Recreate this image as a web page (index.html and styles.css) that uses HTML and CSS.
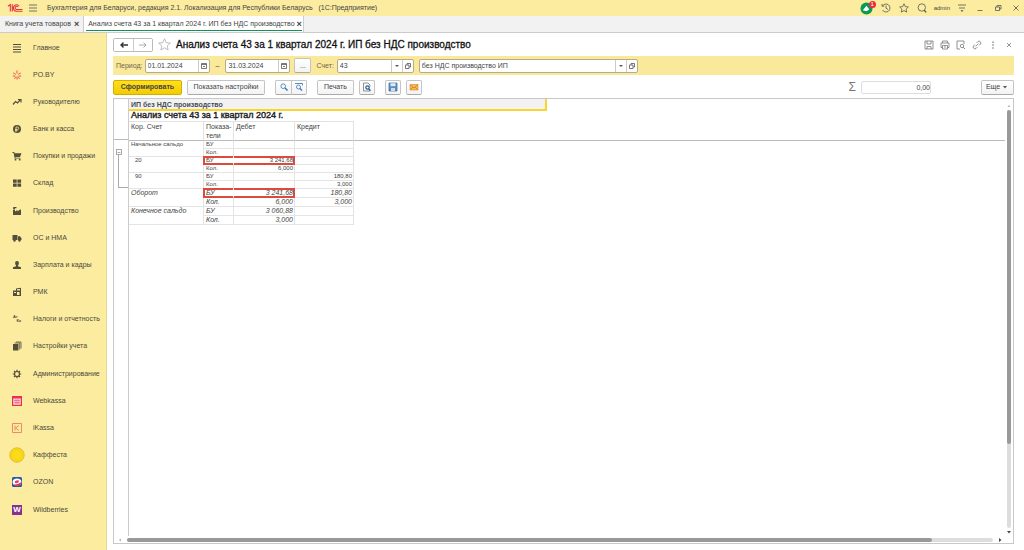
FILE: index.html
```html
<!DOCTYPE html>
<html lang="ru">
<head>
<meta charset="utf-8">
<title>Бухгалтерия для Беларуси</title>
<link rel="stylesheet" href="styles.css">
</head>
<body>
<header class="topbar">
  <svg class="logo" viewBox="0 0 16 10"><path d="M1 3.200l2.300-1.700V8.500M5.300 1.300V8.500M12.300 3A3.300 3.300 0 1 0 9.500 8.300H15.500M11 4A1.600 1.600 0 1 0 9.500 6.500H15.500" fill="none" stroke="#e5353c" stroke-width="1.100"/></svg>
  <button class="plain menu" aria-label="Меню"><svg viewBox="0 0 10 10"><path d="M1 2h8M1 5h8M1 8h8"/></svg></button>
  <span class="app-title">Бухгалтерия для Беларуси, редакция 2.1. Локализация для Республики Беларусь &nbsp; (1С:Предприятие)</span>
  <div class="top-tools">
    <button class="plain bell" aria-label="Уведомления"><svg viewBox="0 0 14 14"><circle cx="7" cy="7" r="6.500" fill="#0a9a55" stroke="none"/><path d="M3 9l4-5 3 4-3 2z" fill="#fff" stroke="none"/></svg><span class="badge">1</span></button>
    <button class="plain" aria-label="История"><svg viewBox="0 0 10 10"><path d="M1.500 3A4 4 0 1 1 1.500 7M1 1v2.200h2.200M5 2.500V5.200L7 6.500"/></svg></button>
    <button class="plain" aria-label="Избранное"><svg viewBox="0 0 10 10"><path d="M5 .8l1.300 2.800 3 .4-2.200 2.100.6 3L5 7.600 2.300 9.100l.6-3L.7 4l3-.4z"/></svg></button>
    <button class="plain" aria-label="Поиск"><svg viewBox="0 0 10 10"><circle cx="4.800" cy="4.500" r="3.700"/><path d="M7.200 7.200l2 2.200" stroke-width="1.300"/></svg></button>
    <span class="user">admin</span>
    <button class="plain" aria-label="Настройки"><svg viewBox="0 0 10 10"><path d="M1 2h8M2 5h6"/><path d="M3.500 7.200h3L5 9z" class="solid"/></svg></button>
    <button class="plain win" aria-label="Свернуть"><svg viewBox="0 0 10 10"><path d="M2.500 7.500h5"/></svg></button>
    <button class="plain win" aria-label="Развернуть"><svg viewBox="0 0 10 10"><path d="M2.500 4h4v3.500h-4zM4 4V2.500h4V6H6.500"/></svg></button>
    <button class="plain win" aria-label="Закрыть"><svg viewBox="0 0 10 10"><path d="M2.500 2.500l5 5M7.500 2.500l-5 5"/></svg></button>
  </div>
</header>
<nav class="tabs">
  <button class="tab"><span>Книга учета товаров</span><b>×</b></button>
  <button class="tab active"><span>Анализ счета 43 за 1 квартал 2024 г. ИП без НДС производство</span><b>×</b></button>
</nav>
<div class="layout">
<nav class="sidebar">
  <a href="#"><svg viewBox="0 0 10 10"><path d="M1 1.500h8M1 4h8M1 6.500h8M1 9h8" class="ln"/></svg>Главное</a>
  <a href="#"><svg viewBox="0 0 10 10"><path d="M5 .5v3M5 6.500v3M1.200 3l2.600 1.300M8.800 3L6.200 4.300M.8 6h2.600M9.200 6H6.600M2.500 8.800l1.300-2M7.500 8.800l-1.300-2" stroke="#ee3c43" fill="none" stroke-width=".9"/></svg>PO.BY</a>
  <a href="#"><svg viewBox="0 0 10 10"><path d="M1 7.500l2.500-3 2 1.500L8 3M6 2.500h3v3" class="ln"/></svg>Руководителю</a>
  <a href="#"><svg viewBox="0 0 10 10"><circle cx="5" cy="5" r="4"/><path d="M4 8V3h1.500a1.200 1.200 0 0 1 0 2.500H3M3 6.700h2.500" fill="none" stroke="#fbec9f" stroke-width=".8"/></svg>Банк и касса</a>
  <a href="#"><svg viewBox="0 0 10 10"><path d="M.5 1h1.700l.5 1.200H9.500L8 6H3.500v.7H8.500v.8H2.700L1.600 2H.5z"/><circle cx="3.500" cy="8.700" r=".9"/><circle cx="7.700" cy="8.700" r=".9"/></svg>Покупки и продажи</a>
  <a href="#"><svg viewBox="0 0 10 10"><path d="M1 1.500h3.700v3.300H1zM5.400 1.500h3.700v3.300H5.400zM1 5.500h3.700v3.300H1zM5.400 5.500h3.700v3.300H5.400z"/></svg>Склад</a>
  <a href="#"><svg viewBox="0 0 10 10"><path d="M1 9V4h2v1.500L5.500 4v1.500L8 3.500h1V9zM1.200 1h3.300v1.200H3V3.500H1.200z"/></svg>Производство</a>
  <a href="#"><svg viewBox="0 0 10 10"><path d="M.5 2h5v5h-5zM6 3.200h2l1.500 2V7H6z"/><circle cx="2.500" cy="7.500" r="1.200"/><circle cx="7.500" cy="7.500" r="1.200"/></svg>ОС и НМА</a>
  <a href="#"><svg viewBox="0 0 10 10"><path d="M5 1a1.900 1.900 0 0 1 1.900 2C6.900 4.500 6 5.500 6 5.500v.8l3 1V9H1V7.300l3-1v-.8S3.100 4.500 3.100 3A1.900 1.900 0 0 1 5 1z"/></svg>Зарплата и кадры</a>
  <a href="#"><svg viewBox="0 0 10 10"><path d="M1 3.500h3V1.500l5-.7V9H1zm4-1.200v1.200h3V2zM2 5v1h2V5zm3 0v3h2.500V5z" fill-rule="evenodd"/></svg>РМК</a>
  <a href="#"><span class="dtkt"><i>Ат</i><i>Кк</i></span>Налоги и отчетность</a>
  <a href="#"><svg viewBox="0 0 10 10"><path d="M1 3h5.500v6.500H1z"/><path d="M2.500 2h5.200v6.500M4 1h5v6.500" fill="none" stroke="#544f3d" stroke-width=".8"/></svg>Настройки учета</a>
  <a href="#"><svg viewBox="0 0 10 10"><circle cx="5" cy="5" r="2.500" class="ln"/><path d="M5 .8v1.700M5 7.500v1.700M.8 5h1.700M7.500 5h1.700M2 2l1.200 1.200M8 2L6.800 3.200M2 8l1.200-1.200M8 8L6.800 6.800" class="ln"/></svg>Администрирование</a>
  <a href="#"><svg viewBox="0 0 10 10"><path d="M0 0h10v10H0z" fill="#ec3150"/><path d="M1.200 2.500h7.600v6.300H1.200z" fill="#fbd3d8"/><path d="M2 4.500h6M2 6.500h6M4 3.200v5M6 3.200v5" stroke="#ec5068" stroke-width=".6"/></svg>Webkassa</a>
  <a href="#"><svg viewBox="0 0 10 10"><path d="M.5.5h9v9h-9zM3 2.500v5M6.800 2.500L3.500 5 7 7.500" fill="none" stroke="#ee7f5c" stroke-width=".9"/></svg>iKassa</a>
  <a href="#"><svg class="big" viewBox="0 0 16 16"><circle cx="8" cy="8" r="7.200" fill="#fbdc16" stroke="#dcae22"/><circle cx="8" cy="8" r="5.200" fill="none" stroke="#f0c618" stroke-width=".6"/></svg>Каффеста</a>
  <a href="#"><svg viewBox="0 0 10 10"><rect width="10" height="10" rx="1.500" fill="#2657a7"/><ellipse cx="5" cy="5" rx="4.400" ry="3.600" fill="#fff"/><path d="M9.400 5C9.400 9 4 10 1.500 7.500 5 7.800 7 6.500 9.400 5z" fill="#f02c50"/><ellipse cx="5" cy="4.700" rx="2.200" ry="1.300" fill="#ee3a5a" transform="rotate(-20 5 5)"/></svg>OZON</a>
  <a href="#"><span class="wb">W</span>Wildberries</a>
</nav>
<main class="main">
  <div class="heading">
    <div class="nav-buttons"><button aria-label="Назад"><svg viewBox="0 0 10 10"><path d="M9 5H2M4.500 2.500L2 5l2.500 2.500" stroke="#333" stroke-width="1.400"/></svg></button><button aria-label="Вперед"><svg viewBox="0 0 10 10"><path d="M1 5h7M5.500 2.500L8 5 5.500 7.500" stroke="#999"/></svg></button></div>
    <button class="plain star" aria-label="В избранное"><svg viewBox="0 0 10 10"><path d="M5 .6l1.300 3 3.200.3L7.100 6l.7 3.200L5 7.500 2.200 9.200 2.900 6 .5 3.900l3.200-.3z"/></svg></button>
    <h1>Анализ счета 43 за 1 квартал 2024 г. ИП без НДС производство</h1>
    <div class="head-tools">
      <button class="plain" aria-label="Сохранить"><svg viewBox="0 0 10 10"><path d="M1 1h8v8H1zM3 1v3h4V1M3 9V6.500h4V9"/></svg></button>
      <button class="plain" aria-label="Печать"><svg viewBox="0 0 10 10"><path d="M2.500 3V1h5v2M2.500 7.500H1V3h8v4.500H7.500M2.500 5.500h5V9h-5zM4 7h2"/></svg></button>
      <button class="plain" aria-label="Просмотр"><svg viewBox="0 0 10 10"><path d="M4 9H1V1h7v3M8.500 9V8"/><circle cx="6" cy="6" r="1.700"/><path d="M7.200 7.200L9 9"/></svg></button>
      <button class="plain" aria-label="Ссылка"><svg viewBox="0 0 10 10"><path d="M4.500 3L6 1.500a1.800 1.800 0 0 1 2.500 2.500L7 5.500M5.500 7L4 8.500A1.800 1.800 0 0 1 1.500 6L3 4.500M3.500 6.500l3-3"/></svg></button>
      <button class="plain" aria-label="Меню окна"><svg viewBox="0 0 10 10"><path d="M5 1.500v1.500M5 4.300v1.500M5 7.200v1.500" stroke-width="1.200"/></svg></button>
      <button class="plain" aria-label="Закрыть окно"><svg viewBox="0 0 10 10"><path d="M3 3l4 4M7 3L3 7"/></svg></button>
    </div>
  </div>
  <form class="filters">
    <label for="from">Период:</label>
    <div class="field date"><input id="from" value="01.01.2024"><button type="button" aria-label="Календарь"><svg viewBox="0 0 8 8"><path d="M1.500 1.500h5v5h-5zM1.500 2.500h5M3 4.500h2" /></svg></button></div>
    <span class="dash">–</span>
    <div class="field date"><input aria-label="Конец периода" value="31.03.2024"><button type="button" aria-label="Календарь"><svg viewBox="0 0 8 8"><path d="M1.500 1.500h5v5h-5zM1.500 2.500h5M3 4.500h2"/></svg></button></div>
    <button type="button" class="btn dots">...</button>
    <label for="acc">Счет:</label>
    <div class="field account"><input id="acc" value="43"><button type="button" aria-label="Выбрать"><svg viewBox="0 0 8 8"><path d="M2 3h4L4 5z" class="solid"/></svg></button><button type="button" aria-label="Открыть"><svg viewBox="0 0 8 8"><path d="M1.500 3h3.500v3.500H1.500zM3 3V1.500h3.500V5H5"/></svg></button></div>
    <div class="field org"><input aria-label="Организация" value="без НДС производство ИП"><button type="button" aria-label="Выбрать"><svg viewBox="0 0 8 8"><path d="M2 3h4L4 5z" class="solid"/></svg></button><button type="button" aria-label="Открыть"><svg viewBox="0 0 8 8"><path d="M1.500 3h3.500v3.500H1.500zM3 3V1.500h3.500V5H5"/></svg></button></div>
  </form>
  <div class="commands">
    <button class="btn primary">Сформировать</button>
    <button class="btn settings">Показать настройки</button>
    <div class="pair"><button class="btn" aria-label="Найти"><svg viewBox="0 0 10 10"><g stroke="#2f75b5"><circle cx="4.200" cy="4.200" r="2.300"/><path d="M6 6l2.500 2.500" stroke-width="1.400"/></g></svg></button><button class="btn" aria-label="Найти далее"><svg viewBox="0 0 10 10"><g stroke="#2f75b5"><path d="M1 1.500h7M6.500 1.500h2v2"/><circle cx="4.500" cy="5" r="2"/><path d="M6 6.500l2 2" stroke-width="1.300"/></g></svg></button></div>
    <button class="btn print">Печать</button>
    <button class="btn icon" aria-label="Предпросмотр"><svg viewBox="0 0 10 10"><path d="M8 9H1.500V1H6l2 2v1.500" stroke="#777"/><circle cx="5.500" cy="5.500" r="1.700" stroke="#245f96" stroke-width="1.200"/><path d="M6.800 7l1.700 1.800" stroke="#245f96" stroke-width="1.300"/></svg></button>
    <button class="btn icon" aria-label="Сохранить"><svg viewBox="0 0 10 10"><path d="M1 1h8v8H1z" fill="#5b8fc0" stroke="#4278a8" stroke-width=".8"/><path d="M2.500 1.200h5v3h-5z" fill="#dceafa" stroke="none"/><path d="M3 6h4v3H3z" fill="#d5dce3" stroke="none"/></svg></button>
    <button class="btn icon" aria-label="Отправить"><svg viewBox="0 0 10 10"><path d="M1 2.500h8v5.500H1z" fill="#f4ba55" stroke="#dd9433" stroke-width=".7"/><path d="M1 2.500l4 3.500 4-3.500M1 8l3-3M9 8L6 5" stroke="#ce7722" stroke-width=".7"/></svg></button>
    <label class="sigma" for="sum">Σ</label>
    <input class="sum" id="sum" value="0,00">
    <button class="btn more">Еще <svg viewBox="0 0 8 8"><path d="M2 3h4L4 5.500z" class="solid"/></svg></button>
  </div>
  <section class="report">
    <div class="gutter"><div class="gutter-head"></div><div class="group"><button aria-label="Свернуть группу">−</button></div></div>
    <div class="sheet">
      <table>
        <colgroup><col class="c1"><col class="c2"><col class="c3"><col class="c4"><col></colgroup>
        <thead>
          <tr class="company"><td colspan="5"><div>ИП без НДС производство</div></td></tr>
          <tr class="title"><td colspan="5">Анализ счета 43 за 1 квартал 2024 г.</td></tr>
          <tr class="cols"><th>Кор. Счет</th><th>Показа-<br>тели</th><th>Дебет</th><th>Кредит</th><td></td></tr>
        </thead>
        <tbody>
          <tr><td rowspan="2">Начальное сальдо</td><td>БУ</td><td></td><td></td></tr>
          <tr><td>Кол.</td><td></td><td></td></tr>
          <tr><td rowspan="2" class="sub">20</td><td class="mark-l">БУ</td><td class="mark-r">3 241,68</td><td></td></tr>
          <tr><td>Кол.</td><td>6,000</td><td></td></tr>
          <tr><td rowspan="2" class="sub">90</td><td>БУ</td><td></td><td>180,80</td></tr>
          <tr><td>Кол.</td><td></td><td>3,000</td></tr>
        </tbody>
        <tbody class="totals">
          <tr><td rowspan="2">Оборот</td><td class="mark-l">БУ</td><td class="mark-r">3 241,68</td><td>180,80</td></tr>
          <tr><td>Кол.</td><td>6,000</td><td>3,000</td></tr>
          <tr><td rowspan="2">Конечное сальдо</td><td>БУ</td><td>3 060,88</td><td></td></tr>
          <tr><td>Кол.</td><td>3,000</td><td></td></tr>
        </tbody>
      </table>
    </div>
    <div class="vbar"><svg viewBox="0 0 8 8"><path d="M2.500 4.800h3L4 3z"/></svg><div class="track"><div class="thumb"></div></div><svg viewBox="0 0 8 8"><path d="M2 3h4L4 5.500z" class="dark"/></svg></div>
    <div class="hbar"><svg viewBox="0 0 8 8"><path d="M4.800 2.500v3L3 4z"/></svg><div class="track"><div class="thumb"></div></div><svg viewBox="0 0 8 8"><path d="M3 2v4l2.500-2z" class="dark"/></svg></div>
  </section>
</main>
</div>
</body>
</html>
```
FILE: styles.css
```css
* { box-sizing: border-box; }
body {
  margin: 0;
  height: 100vh;
  display: flex;
  flex-direction: column;
  font: 7px/8px "Liberation Sans", Arial, sans-serif;
  color: #444;
  background: #fff;
}
button, input { font: inherit; color: inherit; margin: 0; padding: 0; }
svg { display: block; width: 10px; height: 10px; fill: none; stroke: #555; stroke-width: 0.8; flex: none; }
.solid { fill: #555; stroke: none; }
.plain { border: 0; background: none; display: flex; align-items: center; justify-content: center; }

.topbar { height: 16px; flex: none; display: flex; align-items: center; background: #fbec9f; padding: 0 3px 0 7px; }
.logo { width: 16px; height: 10px; }
.menu { margin: 0 9px 0 5px; }
.app-title { flex: 1; white-space: nowrap; }
.top-tools { display: flex; align-items: center; gap: 8px; }
.bell { position: relative; }
.bell svg { width: 13px; height: 13px; }
.badge { position: absolute; right: -3px; top: -1px; width: 7px; height: 7px; border-radius: 4px; background: #ee2b3c; color: #fff; font-size: 6px; line-height: 7px; }
.user { font-size: 6px; margin: 0 -1px; }

.tabs { height: 17px; flex: none; display: flex; background: #f2f2f2; border-bottom: 1px solid #ccc; }
.tab { display: flex; align-items: center; gap: 3px; border: 0; border-right: 1px solid #ccc; background: none; padding: 0 4px 0 5px; white-space: nowrap; }
.tab b { font-size: 9px; }
.tab.active { background: #fff; position: relative; padding: 0 1px 0 4px; gap: 2px; }
.tab.active::after { content: ""; position: absolute; left: 2px; right: 1px; bottom: 1px; height: 1px; background: #149058; }

.layout { flex: 1; min-height: 0; display: flex; }
.sidebar { width: 107px; flex: none; display: flex; flex-direction: column; background: #fbec9f; border-right: 1px solid #e8d88c; padding: 1px 0 27px; }
.sidebar a { flex: 1; display: grid; grid-template-columns: 16px 1fr; gap: 8px; align-items: center; padding-left: 9px; color: #4c483c; text-decoration: none; white-space: nowrap; }
.sidebar svg { justify-self: center; fill: #544f3d; stroke: none; }
.sidebar .ln { fill: none; stroke: #544f3d; stroke-width: 1.2; }
.sidebar .big { width: 16px; height: 16px; }
.dtkt { justify-self: center; display: grid; width: 8px; font: bold 4px/4px "Liberation Sans", sans-serif; }
.dtkt i { font-style: normal; }
.dtkt i + i { justify-self: end; }
.wb { justify-self: center; width: 10px; height: 10px; background: #86308f; color: #fff; font-size: 8px; line-height: 10px; text-align: center; font-weight: 700; }

.main { flex: 1; min-width: 0; display: flex; flex-direction: column; padding: 4px 10px 6px 6px; }
.heading { display: flex; align-items: center; height: 15px; }
.nav-buttons { display: flex; border: 1px solid #bbb; border-radius: 2px; }
.nav-buttons button { width: 19px; height: 12px; border: 0; background: #fff; display: flex; align-items: center; justify-content: center; }
.nav-buttons button + button { border-left: 1px solid #ccc; }
.star { margin: 0 5px; }
.star svg { width: 13px; height: 13px; stroke: #aaa; stroke-width: 0.6; }
h1 { flex: 1; margin: 0; font-size: 10px; line-height: 14px; font-weight: 400; color: #111; -webkit-text-stroke: 0.3px #111; white-space: nowrap; }
.head-tools { display: flex; gap: 6px; }
.head-tools svg { stroke: #777; }

.filters { display: flex; align-items: center; height: 19px; margin-top: 4px; background: #fbe99b; padding: 0 3px; white-space: nowrap; }
.field { display: flex; height: 14px; border: 1px solid #b5ad8a; border-radius: 2px; background: #fff; }
.field input { flex: 1; min-width: 0; border: 0; background: none; padding-left: 2px; }
.field button { width: 11px; border: 0; border-left: 1px solid #ccc; background: none; display: flex; align-items: center; justify-content: center; }
.field svg { width: 8px; height: 8px; }
.date { width: 65px; }
.filters label { color: #6b664f; }
.filters label[for="from"] { margin-right: 2px; }
.dash { margin: 0 6px; }
.account { width: 77px; margin: 0 5px 0 3px; }
.org { width: 219px; }
.btn { display: flex; align-items: center; justify-content: center; height: 15px; border: 1px solid #c4c4c4; border-bottom-color: #aaa; border-radius: 2px; background: linear-gradient(#fff, #f3f3f3); white-space: nowrap; }
.dots { width: 17px; margin: 0 5px 0 4px; }

.commands { display: flex; align-items: center; gap: 5px; height: 23px; padding-top: 1px; }
.primary { width: 69px; background: linear-gradient(#ffe01e, #f4cb00); border-color: #d2ae00; font-weight: 700; }
.settings { width: 78px; }
.pair { display: flex; margin: 0 5px; }
.pair .btn { width: 16px; }
.pair .btn:first-child { border-radius: 2px 0 0 2px; border-right: 0; }
.pair .btn:last-child { border-radius: 0 2px 2px 0; }
.print { width: 37px; }
.icon { width: 16px; }
.print + .icon { margin-right: 5px; }
.sigma { margin-left: auto; font-size: 12px; line-height: 12px; color: #777; }
.sum { width: 70px; height: 13px; border: 1px solid #ddd; border-radius: 2px; text-align: right; }
.more { width: 33px; margin-left: 45px; gap: 1px; }
.more svg { width: 8px; height: 8px; }

.report { flex: 1; min-height: 0; display: grid; grid-template-columns: 15px 1fr 8px; grid-template-rows: 1fr 7px; border: 1px solid #c8c8c8; }
.gutter { border-right: 1px solid #ccc; }
.gutter-head { height: 41px; border-bottom: 1px solid #bbb; }
.group { height: 39px; margin: 9px 0 0 4px; border-bottom: 1px solid #aaa; }
.group button { display: block; width: 6px; height: 6px; margin-left: -2px; border: 1px solid #aaa; background: #fff; font-size: 6px; line-height: 4px; }
.group::after { content: ""; display: block; height: 32px; border-left: 1px solid #aaa; }
.sheet { min-width: 0; overflow: hidden; }
table { width: 100%; table-layout: fixed; border-collapse: separate; border-spacing: 0; font-size: 6px; line-height: 7px; }
.c1 { width: 75px; }
.c2 { width: 30px; }
.c3 { width: 61px; }
.c4 { width: 59px; }
th, td { padding: 0 1px 0 2px; text-align: left; vertical-align: top; font-weight: 400; }
.company td { padding: 0; }
.company div { width: 418px; height: 12px; padding-left: 2px; background: #f2f2f2; border-right: 2px solid #fbd52c; border-bottom: 2px solid #fbd52c; font-size: 7px; line-height: 11px; font-weight: 700; color: #454d59; }
.title td { font-size: 9px; line-height: 9px; color: #222; -webkit-text-stroke: 0.4px #222; height: 10px; }
.cols th, .cols td { height: 19px; font-size: 7px; line-height: 9px; border-bottom: 1px solid #bbb; }
.cols th { border-right: 1px solid #e2e2e2; border-top: 1px solid #e2e2e2; }
.cols th { padding-right: 0; }
tbody td { height: 8px; border-right: 1px solid #e4e4e4; border-bottom: 1px solid #e4e4e4; white-space: nowrap; }
tbody td:nth-last-child(-n+2) { text-align: right; }
tbody .sub { padding-left: 6px; }
.totals td { height: 9px; font-size: 7px; line-height: 8px; font-style: italic; }
tbody .mark-l { box-shadow: -1px -1px #dc4a3c, -1px 0 #dc4a3c, inset 1px 1px #dc4a3c, inset 0 -1px #dc4a3c; border-bottom-color: #dc4a3c; border-right-color: #fff; }
tbody .mark-r { box-shadow: 0 -1px #dc4a3c, inset -1px 1px #dc4a3c, inset 0 -1px #dc4a3c; border-right-color: #dc4a3c; border-bottom-color: #dc4a3c; }

.vbar { display: flex; flex-direction: column; align-items: center; padding-top: 3px; }
.hbar { grid-column: 1 / -1; display: flex; align-items: center; padding: 0 9px 0 2px; }
.vbar svg, .hbar svg { width: 8px; height: 8px; fill: #aaa; stroke: none; }
.vbar .dark, .hbar .dark { fill: #444; }
.track { flex: 1; background: #ddd; border-radius: 2px; }
.vbar .track { width: 4px; }
.hbar .track { height: 4px; margin: 0 3px; }
.thumb { background: #999; border-radius: 2px; }
.vbar .thumb { width: 4px; height: 80%; }
.hbar .thumb { height: 4px; width: 93%; }
```
